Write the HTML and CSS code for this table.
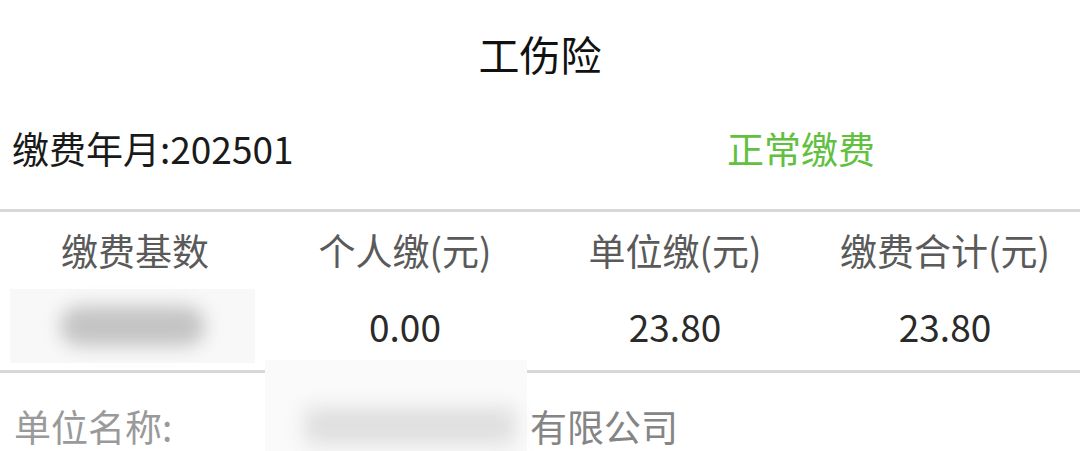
FILE: index.html
```html
<!DOCTYPE html>
<html lang="zh-CN">
<head>
<meta charset="utf-8">
<link rel="stylesheet" href="styles.css">
</head>
<body>
<div class="page">
  <div class="title">工伤险</div>
  <div class="status-row">
    <div class="month">缴费年月:202501</div>
    <div class="status">正常缴费</div>
  </div>
  <div class="table">
    <div class="row head">
      <div class="cell">缴费基数</div>
      <div class="cell">个人缴(元)</div>
      <div class="cell">单位缴(元)</div>
      <div class="cell">缴费合计(元)</div>
    </div>
    <div class="row vals">
      <div class="cell"><div class="redact-a"><span class="blob-a"></span></div></div>
      <div class="cell">0.00</div>
      <div class="cell">23.80</div>
      <div class="cell">23.80</div>
    </div>
  </div>
  <div class="unit-row">
    <span class="label">单位名称:</span>
    <span class="unit-name"><span class="redact-b"><span class="blob-b"></span></span>有限公司</span>
  </div>
</div>
</body>
</html>
```

FILE: styles.css
```css
html, body {
  margin: 0;
  padding: 0;
  background: #fff;
}
.page {
  width: 1080px;
  height: 451px;
  overflow: hidden;
  font-family: "Noto Sans CJK SC", "Noto Sans", sans-serif;
}
.title {
  height: 118px;
  display: flex;
  align-items: center;
  justify-content: center;
  padding-bottom: 12px;
  box-sizing: border-box;
  font-size: 41px;
  color: #111;
}
.status-row {
  display: flex;
  height: 94px;
  align-items: center;
  padding: 0 0 32px 12px;
  box-sizing: border-box;
  font-size: 37px;
  border-bottom: 3px solid #d8d8d8;
}
.month {
  width: 715px;
  color: #1a1a1a;
}
.status {
  color: #62c040;
}
.table {
  border-bottom: 3px solid #d8d8d8;
}
.row {
  display: grid;
  grid-template-columns: repeat(4, 1fr);
}
.cell {
  text-align: center;
  display: flex;
  justify-content: center;
  align-items: center;
}
.head {
  height: 70px;
  font-size: 37px;
  color: #5a5a5a;
  padding-top: 6px;
  box-sizing: border-box;
}
.vals {
  height: 88px;
  font-size: 37px;
  color: #2a2a2a;
}
.vals .cell:first-child {
  justify-content: flex-start;
}
.redact-a {
  width: 245px;
  height: 74px;
  margin-left: 10px;
  background: #f8f8f8;
  display: flex;
  align-items: center;
  justify-content: center;
}
.blob-a {
  display: block;
  width: 145px;
  height: 40px;
  border-radius: 20px;
  background: #c4c4c4;
  filter: blur(9px);
}
.unit-row {
  position: relative;
  height: 78px;
  display: flex;
  align-items: center;
  padding: 28px 0 0 14px;
  box-sizing: border-box;
  font-size: 37px;
  line-height: 1;
  color: #9a9a9a;
}
.label {
  width: 516px;
}
.unit-name {
  color: #858585;
}
.redact-b {
  position: absolute;
  left: 265px;
  top: -13px;
  width: 262px;
  height: 92px;
  background: #fafafa;
}
.blob-b {
  position: absolute;
  left: 40px;
  top: 48px;
  width: 210px;
  height: 36px;
  background: #dedede;
  filter: blur(10px);
}
```
